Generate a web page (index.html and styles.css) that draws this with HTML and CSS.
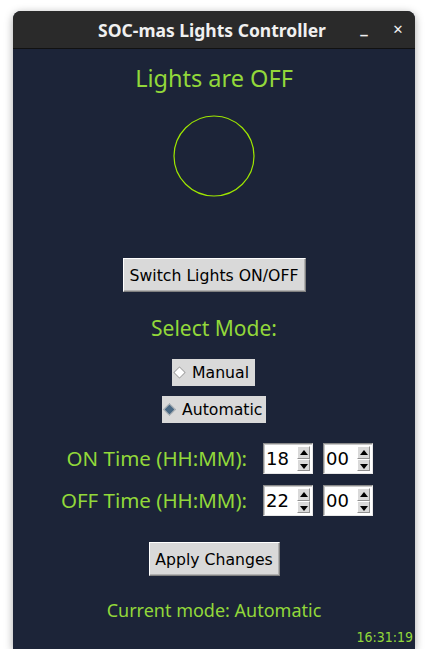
FILE: index.html
```html
<!DOCTYPE html>
<html>
<head>
<meta charset="utf-8">
<link rel="stylesheet" href="styles.css">
</head>
<body>
<div class="desktop">
  <div class="window">
    <div class="titlebar">
      <span class="title">SOC-mas Lights Controller</span>
      <div class="controls">
        <span class="min">_</span>
        <span class="close">✕</span>
      </div>
    </div>
    <div class="content">
      <div class="status">Lights are OFF</div>
      <svg class="lamp" width="82" height="82" viewBox="0 0 82 82">
        <circle cx="41" cy="41" r="40" fill="none" stroke="#9ee600" stroke-width="1.2"/>
      </svg>
      <button class="tkbtn switch">Switch Lights ON/OFF</button>
      <div class="heading">Select Mode:</div>
      <div class="radio manual"><span class="dia"></span>Manual</div>
      <div class="radio auto"><span class="dia on"></span>Automatic</div>
      <div class="times">
        <div class="tlabel">ON Time (HH:MM):</div>
        <div class="spin"><span class="val">18</span><span class="arrows"><span class="up"></span><span class="down"></span></span></div>
        <div class="spin"><span class="val">00</span><span class="arrows"><span class="up"></span><span class="down"></span></span></div>
        <div class="tlabel">OFF Time (HH:MM):</div>
        <div class="spin"><span class="val">22</span><span class="arrows"><span class="up"></span><span class="down"></span></span></div>
        <div class="spin"><span class="val">00</span><span class="arrows"><span class="up"></span><span class="down"></span></span></div>
      </div>
      <button class="tkbtn apply">Apply Changes</button>
      <div class="current">Current mode: Automatic</div>
      <div class="clock">16:31:19</div>
    </div>
  </div>
</div>
</body>
</html>
```
FILE: styles.css
```css
html, body {
  margin: 0;
  padding: 0;
  background: #ffffff;
}
.desktop {
  padding: 11px 13px 0 13px;
  width: 402px;
}
.window {
  width: 402px;
  height: 638px;
  border-radius: 8px 8px 0 0;
  overflow: hidden;
  box-shadow: 0 2px 8px rgba(0,0,0,0.35);
  display: flex;
  flex-direction: column;
  background: #1c2438;
}
.titlebar {
  height: 37px;
  background: #2a2a2a;
  border-bottom: 1px solid #111;
  position: relative;
  display: flex;
  align-items: center;
  justify-content: center;
  flex: none;
}
.title {
  font-family: "Noto Sans", "Open Sans", sans-serif;
  font-weight: 700;
  font-size: 17.5px;
  color: #f0f0f0;
  margin-left: -4px;
}
.controls {
  position: absolute;
  right: 0;
  top: 0;
  height: 37px;
  display: flex;
  align-items: center;
}
.min {
  font-family: "DejaVu Sans", sans-serif;
  font-weight: 700;
  color: #f0f0f0;
  font-size: 15px;
  width: 34px;
  text-align: center;
  margin-top: -4px;
}
.close {
  font-family: "DejaVu Sans", sans-serif;
  font-weight: 700;
  color: #f0f0f0;
  font-size: 13px;
  width: 34px;
  text-align: center;
}
.content {
  flex: 1;
  display: flex;
  flex-direction: column;
  align-items: center;
  padding-top: 14px;
  font-family: "Noto Sans", "Open Sans", sans-serif;
  color: #92d83a;
}
.status {
  font-size: 23.5px;
  line-height: 30px;
}
.lamp {
  display: block;
  margin-top: 22px;
}
.tkbtn {
  font-family: "DejaVu Sans", sans-serif;
  font-size: 15.7px;
  color: #000;
  background: #d9d9d9;
  border: 1px solid;
  border-color: #ffffff #808080 #808080 #ffffff;
  box-shadow: inset -1px -1px 0 #b0b0b0;
  padding: 0;
  height: 34px;
  margin: 0;
}
.switch {
  width: 183px;
  margin-top: 61px;
}
.heading {
  font-size: 21px;
  line-height: 28px;
  margin-top: 22px;
}
.radio {
  font-family: "DejaVu Sans", sans-serif;
  font-size: 15.7px;
  color: #000;
  background: #d9d9d9;
  height: 27px;
  display: flex;
  align-items: center;
  box-sizing: border-box;
  padding-left: 2px;
}
.manual {
  width: 83px;
  margin-top: 17px;
  margin-left: -1px;
}
.auto {
  width: 104px;
  margin-top: 10px;
}
.dia {
  width: 7px;
  height: 7px;
  transform: rotate(45deg);
  background: #ffffff;
  border: 1px solid #a0a0a0;
  margin-right: 8px;
  margin-left: 1px;
}
.dia.on {
  background: #4a6984;
  border-color: #c0c0c0;
}
.times {
  display: grid;
  grid-template-columns: auto 50px 50px;
  column-gap: 10px;
  row-gap: 11px;
  align-items: center;
  margin-top: 20px;
  margin-left: 6px;
}
.tlabel {
  font-size: 20.5px;
  text-align: right;
  line-height: 31px;
  margin-right: 6px;
}
.spin {
  height: 31px;
  box-sizing: border-box;
  background: #fff;
  border: 1px solid;
  border-color: #8a8a8a #e8e8e8 #e8e8e8 #8a8a8a;
  box-shadow: inset 1px 1px 0 #c8c8c8;
  display: flex;
  align-items: stretch;
  padding: 2px 2px 2px 0;
}
.val {
  flex: 1;
  font-family: "DejaVu Sans", sans-serif;
  font-size: 18px;
  color: #000;
  line-height: 25px;
  padding-left: 2px;
}
.arrows {
  width: 13px;
  display: flex;
  flex-direction: column;
}
.up, .down {
  flex: 1;
  background: #d9d9d9;
  border: 1px solid;
  border-color: #ffffff #909090 #909090 #ffffff;
  position: relative;
}
.up::after, .down::after {
  content: "";
  position: absolute;
  left: 2px;
  width: 0;
  height: 0;
  border-left: 4px solid transparent;
  border-right: 4px solid transparent;
}
.up::after {
  top: 3px;
  border-bottom: 5px solid #000;
}
.down::after {
  top: 4px;
  border-top: 5px solid #000;
}
.apply {
  width: 131px;
  margin-top: 26px;
}
.current {
  font-size: 18px;
  line-height: 24px;
  margin-top: 22px;
}
.clock {
  align-self: flex-end;
  font-family: "DejaVu Sans", sans-serif;
  font-stretch: condensed;
  font-size: 14px;
  line-height: 18px;
  margin-top: 6px;
  margin-right: 2px;
}
```
